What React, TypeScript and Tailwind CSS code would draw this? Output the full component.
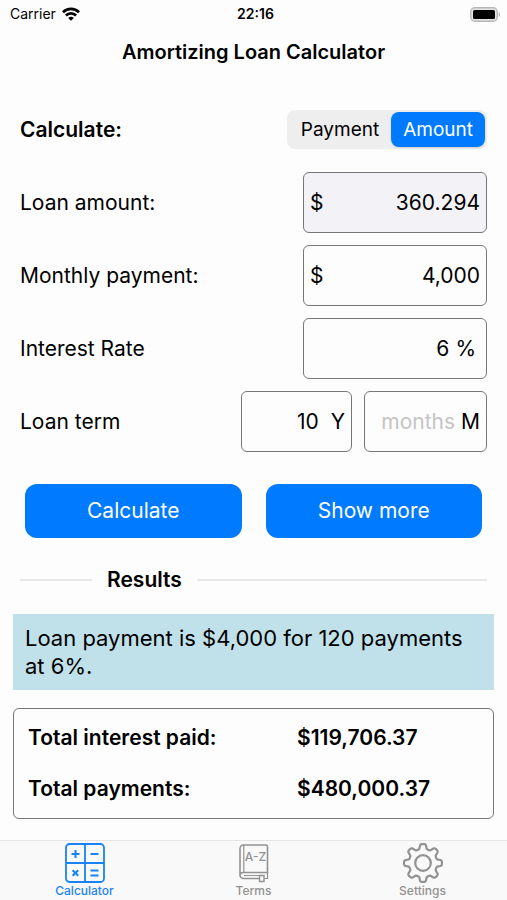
import { useState, type ReactNode } from "react";

function WifiIcon() {
  return (
    <svg viewBox="0 0 18 14" className="h-[14px] w-[18px]" aria-hidden="true">
      <g fill="none" stroke="#000" strokeWidth="2.6">
        <path d="M1 5.2a11.4 11.4 0 0 1 16 0" />
        <path d="M3.9 8.5a7.2 7.2 0 0 1 10.2 0" />
      </g>
      <path d="M9 13.8 6.2 11a4 4 0 0 1 5.6 0Z" />
    </svg>
  );
}

function BatteryIcon() {
  return (
    <svg viewBox="0 0 31 15" className="h-[15px] w-[31px]" aria-hidden="true">
      <rect x="0.8" y="0.8" width="26.4" height="13.4" rx="4" fill="#e4e4e4" stroke="#b8b8b8" strokeWidth="1.4" />
      <rect x="3" y="3" width="22" height="9" rx="1.5" />
      <path d="M28.6 5.2c1.9.6 1.9 4 0 4.6Z" fill="#b4b4b4" />
    </svg>
  );
}

function CalculatorIcon() {
  return (
    <svg viewBox="0 0 40 40" className="size-10" fill="none" stroke="currentColor" strokeWidth="1.8" aria-hidden="true">
      <rect x="1" y="1" width="38" height="38" rx="3.5" />
      <path d="M20 1v38M1 20h38" />
      <path strokeWidth="2" d="M6.5 11h8M10.5 7v8M25.5 11h8M7.6 27.2l5.6 5.6M13.2 27.2l-5.6 5.6M25.5 27.5h8M25.5 32.5h8" />
    </svg>
  );
}

function TermsIcon() {
  return (
    <svg viewBox="0 0 40 40" className="size-10" fill="none" stroke="currentColor" strokeWidth="1.6" aria-hidden="true">
      <path d="M25.5 35.5H9.5A3.5 3.5 0 0 1 6 32V5.5A3.5 3.5 0 0 1 9.5 2H32a1.5 1.5 0 0 1 1.500 1.500V29.500H9.500A3 3 0 0 0 6 32.500" />
      <path d="M9.8 2v27.5M33.500 29.500v6H30M10 32.500h15.500" strokeWidth="1.2" />
      <path d="M25.5 32.500v6h4.500v-6Z" strokeWidth="1.4" />
      <text x="21.500" y="17.500" textAnchor="middle" fontSize="12" fontWeight="500" fontFamily="Inter, sans-serif" fill="currentColor" stroke="none">
        A-Z
      </text>
    </svg>
  );
}

// closed curve with eight rounded teeth
const gearPath = (() => {
  const points: string[] = [];
  for (let i = 0; i < 144; i++) {
    const angle = (i / 144) * Math.PI * 2;
    const wave = Math.tanh(2.2 * Math.cos(8 * angle)) / Math.tanh(2.2);
    const radius = 16.6 + 2.4 * wave;
    points.push(`${(20 + radius * Math.cos(angle)).toFixed(2)} ${(20 + radius * Math.sin(angle)).toFixed(2)}`);
  }
  return `M${points.join("L")}Z`;
})();

function SettingsIcon() {
  return (
    <svg viewBox="0 0 40 40" className="size-10" fill="none" stroke="currentColor" strokeWidth="2.2" strokeLinejoin="round" aria-hidden="true">
      <path d={gearPath} />
      <circle cx="20" cy="20" r="7.8" />
    </svg>
  );
}

type FieldRowProps = {
  label: string;
  htmlFor: string;
  children: ReactNode;
};

function FieldRow({ label, htmlFor, children }: FieldRowProps) {
  return (
    <div className="flex items-center justify-between">
      <label htmlFor={htmlFor}>{label}</label>
      {children}
    </div>
  );
}

const boxClass = "flex h-[61px] items-center rounded-md border border-[#777]";
const inputClass = "min-w-0 flex-1 bg-transparent text-right outline-none placeholder:text-[#c4c4c6]";

const modes = ["Payment", "Amount"];

const tabs = [
  { label: "Calculator", icon: <CalculatorIcon />, active: true },
  { label: "Terms", icon: <TermsIcon />, active: false },
  { label: "Settings", icon: <SettingsIcon />, active: false },
];

const totals = [
  { label: "Total interest paid:", value: "$119,706.37" },
  { label: "Total payments:", value: "$480,000.37" },
];

export default function App() {
  const [mode, setMode] = useState("Amount");

  return (
    <div className="flex min-h-screen flex-col bg-[#fdfdfd] font-['Inter','Liberation_Sans',sans-serif] text-[21px] leading-7 text-black">
      <div className="grid h-7 grid-cols-3 items-center pr-1.5 pl-2.5 text-sm">
        <div className="flex items-center gap-1.5">
          <span>Carrier</span>
          <WifiIcon />
        </div>
        <span className="text-center font-semibold">22:16</span>
        <div className="flex justify-end">
          <BatteryIcon />
        </div>
      </div>

      <h1 className="mt-2.5 text-center text-xl leading-7 font-semibold">Amortizing Loan Calculator</h1>

      <main className="flex-1 px-[13px] pt-11 pb-4">
        <div className="px-[7px]">
          <div className="flex items-center justify-between">
            <span className="font-semibold">Calculate:</span>
            <div className="flex h-[39px] rounded-lg bg-[#eeeeef] p-0.5 text-[19px]" role="group" aria-label="Calculate">
              {modes.map((item) => (
                <button
                  key={item}
                  type="button"
                  aria-pressed={mode === item}
                  onClick={() => setMode(item)}
                  className={`rounded-lg px-3 ${mode === item ? "bg-[#007aff] text-white shadow-sm" : ""}`}
                >
                  {item}
                </button>
              ))}
            </div>
          </div>

          <form className="mt-[23px] flex flex-col gap-3">
            <FieldRow label="Loan amount:" htmlFor="amount">
              <div className={`${boxClass} w-46 bg-[#f2f2f7] px-1.5`}>
                <span>$</span>
                <input id="amount" className={inputClass} defaultValue="360.294" readOnly />
              </div>
            </FieldRow>
            <FieldRow label="Monthly payment:" htmlFor="payment">
              <div className={`${boxClass} w-46 px-1.5`}>
                <span>$</span>
                <input id="payment" className={inputClass} defaultValue="4,000" />
              </div>
            </FieldRow>
            <FieldRow label="Interest Rate" htmlFor="rate">
              <div className={`${boxClass} w-46 gap-1.5 px-2.5`}>
                <input id="rate" className={inputClass} defaultValue="6" />
                <span>%</span>
              </div>
            </FieldRow>
            <FieldRow label="Loan term" htmlFor="years">
              <div className="flex gap-3">
                <div className={`${boxClass} w-[111px] gap-3 px-1.5`}>
                  <input id="years" className={inputClass} defaultValue="10" />
                  <span>Y</span>
                </div>
                <div className={`${boxClass} w-[123px] gap-1.5 px-1.5`}>
                  <input id="months" aria-label="Loan term months" className={inputClass} placeholder="months" />
                  <span>M</span>
                </div>
              </div>
            </FieldRow>
          </form>

          <div className="mt-8 grid grid-cols-2 gap-6 px-[5px] text-white">
            <button type="button" className="h-[54px] rounded-xl bg-[#007aff]">
              Calculate
            </button>
            <button type="button" className="h-[54px] rounded-xl bg-[#007aff]">
              Show more
            </button>
          </div>

          <div className="mt-7 flex items-center gap-[15px]">
            <div className="h-0.5 w-[72px] bg-[#e8e8e8]" />
            <h2 className="font-semibold">Results</h2>
            <div className="h-0.5 flex-1 bg-[#e8e8e8]" />
          </div>
        </div>

        <p className="mt-5 bg-[#c1e1ea] py-2.5 pr-6 pl-3 text-[22px] leading-7">Loan payment is $4,000 for 120 payments at 6%.</p>

        <dl className="mt-[18px] flex flex-col gap-[23px] rounded-md border border-[#777] px-3.5 py-[15px] font-semibold">
          {totals.map((row) => (
            <div key={row.label} className="grid grid-cols-[269px_1fr]">
              <dt>{row.label}</dt>
              <dd>{row.value}</dd>
            </div>
          ))}
        </dl>
      </main>

      <nav className="grid grid-cols-3 border-t border-[#e4e4e4] bg-[#f9f9f9] pt-0.5 pb-0.5">
        {tabs.map((tab) => (
          <button
            key={tab.label}
            type="button"
            className={`flex flex-col items-center gap-px text-xs leading-3.5 font-medium ${tab.active ? "text-[#1a82f7]" : "text-[#929292]"}`}
          >
            {tab.icon}
            {tab.label}
          </button>
        ))}
      </nav>
    </div>
  );
}
